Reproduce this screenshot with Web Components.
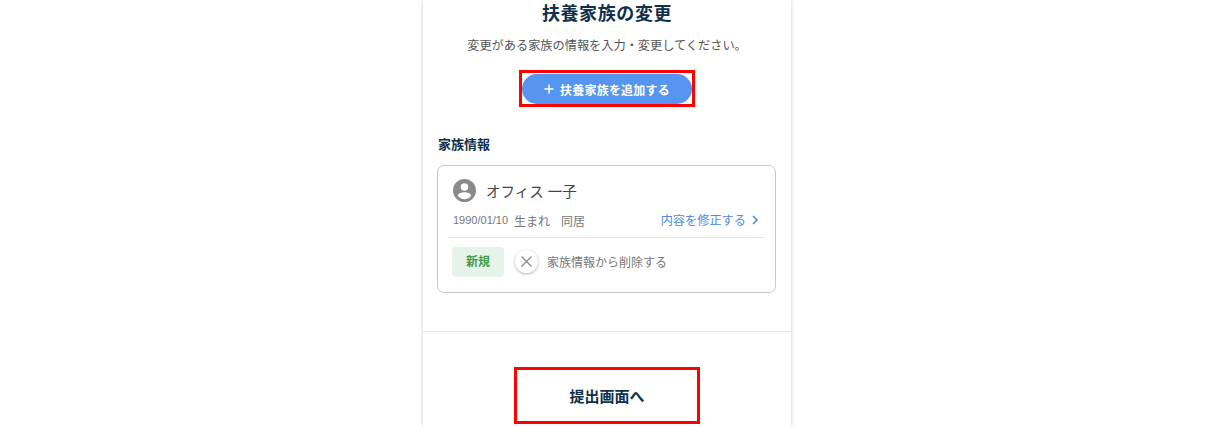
<!DOCTYPE html>
<html lang="ja">
<head>
<meta charset="utf-8">
<title>扶養家族の変更</title>
<style>
    html, body { margin: 0; height: 100%; background: #fff; overflow: hidden; }
    body { font-family: "Liberation Sans", "Noto Sans CJK JP", sans-serif; }
</style>
</head>
<body>
<app-page>
    <span slot="title">扶養家族の変更</span>
    <span slot="lead">変更がある家族の情報を入力・変更してください。</span>
    <add-button>扶養家族を追加する</add-button>
    <family-card name="オフィス 一子" birth="1990/01/10" suffix="生まれ" living="同居"></family-card>
    <next-button>提出画面へ</next-button>
</app-page>

<script>
const pageTemplate = document.createElement('template');
pageTemplate.innerHTML = `
    <style>
        :host { display: flex; justify-content: center; height: 427px; padding-right: 5px; box-sizing: border-box; }
        .panel {
            width: 368px;
            height: 427px;
            background: #fff;
            box-shadow: 0 0 4px rgba(0, 0, 0, .22);
            display: flex;
            flex-direction: column;
            overflow: hidden;
        }
        h1 {
            margin: 0;
            padding-top: 1px;
            height: 27px;
            line-height: 27px;
            font-size: 18px;
            letter-spacing: .6px;
            font-weight: 700;
            color: #0f3048;
            text-align: center;
        }
        p {
            margin: 9px 0 0;
            height: 18px;
            line-height: 18px;
            font-size: 12.2px;
            color: #555;
            text-align: center;
        }
        .add { display: flex; justify-content: center; margin-top: 15px; }
        h2 {
            margin: 28px 0 0 15px;
            height: 20px;
            line-height: 20px;
            font-size: 13px;
            font-weight: 700;
            color: #0f3048;
        }
        .cards { padding: 10px 15px 0 14px; }
        hr { border: 0; border-top: 1px solid #e6e6e6; margin: 38px 0 0; }
        .foot { display: flex; justify-content: center; margin-top: 35px; }
    </style>
    <div class="panel">
        <h1><slot name="title"></slot></h1>
        <p><slot name="lead"></slot></p>
        <div class="add"><slot name="add"></slot></div>
        <h2>家族情報</h2>
        <div class="cards"><slot name="card"></slot></div>
        <hr>
        <div class="foot"><slot name="next"></slot></div>
    </div>
`;

class AppPage extends HTMLElement {
    constructor() {
        super();
        this.attachShadow({ mode: 'open' });
        this.shadowRoot.appendChild(pageTemplate.content.cloneNode(true));
    }

    connectedCallback() {
        this.querySelector('add-button').slot = 'add';
        this.querySelector('family-card').slot = 'card';
        this.querySelector('next-button').slot = 'next';
    }
}

const addTemplate = document.createElement('template');
addTemplate.innerHTML = `
    <style>
        :host {
            display: block;
            border: 3px solid #f00;
            padding: 1px 0 0;
        }
        .btn {
            display: flex;
            align-items: center;
            justify-content: center;
            gap: 6px;
            width: 170px;
            height: 30px;
            border-radius: 15px;
            background: #5595ef;
            color: #fff;
            font-size: 12px;
            letter-spacing: .2px;
            font-weight: 700;
        }
        svg { display: block; width: 10px; height: 10px; }
    </style>
    <div class="btn">
        <svg viewBox="0 0 10 10"><path d="M5 .5v9M.5 5h9" stroke="#fff" stroke-width="1.5" fill="none"/></svg>
        <slot></slot>
    </div>
`;

class AddButton extends HTMLElement {
    constructor() {
        super();
        this.attachShadow({ mode: 'open' });
        this.shadowRoot.appendChild(addTemplate.content.cloneNode(true));
    }
}

const cardTemplate = document.createElement('template');
cardTemplate.innerHTML = `
    <style>
        :host {
            display: block;
            height: 128px;
            box-sizing: border-box;
            border: 1.5px solid #c9c9c9;
            border-radius: 7px;
            padding: 0 10px;
        }
        .name { display: flex; align-items: center; gap: 10px; height: 38px; padding: 5px 0 0 5px; font-size: 14.5px; color: #444; }
        .name svg { width: 23px; height: 23px; display: block; }
        .meta { display: flex; align-items: center; height: 22px; font-size: 12px; color: #777; padding-left: 5px; }
        .date { font-size: 11px; margin-right: 6px; }
        .living { margin-left: 11px; }
        .edit { margin-left: auto; display: flex; align-items: center; gap: 6px; color: #4f8be0; padding-right: 7px; font-size: 12.2px; }
        .edit svg { width: 6px; height: 10px; display: block; }
        .actions {
            display: flex;
            align-items: center;
            margin-top: 6px;
            height: 47px;
            border-top: 1px solid #e6e6e6;
            padding: 0 0 0 4px;
            font-size: 12px;
            color: #777;
        }
        .tag {
            width: 52px;
            height: 30px;
            line-height: 30px;
            text-align: center;
            border-radius: 4px;
            background: #e6f3ea;
            color: #3f9a55;
            font-weight: 700;
        }
        .del {
            width: 23px;
            height: 23px;
            margin: 0 9px 0 11px;
            border-radius: 50%;
            background: #fff;
            box-shadow: 0 1px 3px rgba(0, 0, 0, .3);
            display: flex;
            align-items: center;
            justify-content: center;
        }
        .del svg { width: 11px; height: 11px; display: block; }
    </style>
    <div class="name">
        <svg viewBox="0 0 24 24"><path fill="#8a8a8a" d="M12 0a12 12 0 1 0 0 24 12 12 0 0 0 0-24zm0 4.4a3.9 3.9 0 1 1 0 7.8 3.9 3.9 0 0 1 0-7.8zm0 16.6a8.9 8.9 0 0 1-7-3.5c.1-2.4 4.7-3.6 7-3.6s6.900 1.200 7 3.600a8.900 8.900 0 0 1-7 3.500z"/></svg>
        <span id="name"></span>
    </div>
    <div class="meta">
        <span class="date" id="birth"></span><span id="suffix"></span><span class="living" id="living"></span>
        <span class="edit">内容を修正する<svg viewBox="0 0 6 10"><path d="M1 1l4 4-4 4" fill="none" stroke="#4f8be0" stroke-width="1.6"/></svg></span>
    </div>
    <div class="actions">
        <span class="tag">新規</span>
        <span class="del"><svg viewBox="0 0 11 11"><path d="M.5.5l10 10M10.500.5l-10 10" stroke="#8a8a8a" stroke-width="1.3" fill="none"/></svg></span>
        <span>家族情報から削除する</span>
    </div>
`;

class FamilyCard extends HTMLElement {
    constructor() {
        super();
        this.attachShadow({ mode: 'open' });
        this.shadowRoot.appendChild(cardTemplate.content.cloneNode(true));
    }

    connectedCallback() {
        ['name', 'birth', 'suffix', 'living'].forEach((key) => {
            this.shadowRoot.querySelector('#' + key).textContent = this.getAttribute(key);
        });
    }
}

const nextTemplate = document.createElement('template');
nextTemplate.innerHTML = `
    <style>
        :host {
            display: block;
            border: 3px solid #f00;
        }
        .btn {
            display: flex;
            align-items: center;
            justify-content: center;
            width: 180px;
            height: 51px;
            background: #fff;
            color: #0f3048;
            font-size: 15px;
            font-weight: 700;
        }
    </style>
    <div class="btn"><slot></slot></div>
`;

class NextButton extends HTMLElement {
    constructor() {
        super();
        this.attachShadow({ mode: 'open' });
        this.shadowRoot.appendChild(nextTemplate.content.cloneNode(true));
    }
}

window.customElements.define('app-page', AppPage);
window.customElements.define('add-button', AddButton);
window.customElements.define('family-card', FamilyCard);
window.customElements.define('next-button', NextButton);
</script>
</body>
</html>
